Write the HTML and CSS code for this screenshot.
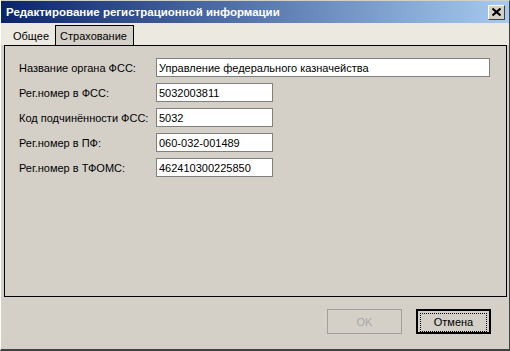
FILE: index.html
```html
<!DOCTYPE html>
<html lang="ru">
<head>
    <meta charset="UTF-8">
    <title>Редактирование регистрационной информации</title>
    <link rel="stylesheet" href="styles.css">
</head>
<body>
    <div class="window">
        <div class="titlebar">
            <span class="title">Редактирование регистрационной информации</span>
            <button class="close">
                <svg width="9" height="8" viewBox="0 0 9 8">
                    <path d="M0.5 0.5 L8.5 7.5 M8.5 0.5 L0.5 7.5" stroke="#000" stroke-width="2"/>
                </svg>
            </button>
        </div>
        <div class="tabs">
            <div class="tab">Общее</div>
            <div class="tab active">Страхование</div>
        </div>
        <div class="panel">
            <div class="row">
                <label>Название органа ФСС:</label>
                <input class="wide" type="text" value="Управление федерального казначейства">
            </div>
            <div class="row">
                <label>Рег.номер в ФСС:</label>
                <input type="text" value="5032003811">
            </div>
            <div class="row">
                <label>Код подчинённости ФСС:</label>
                <input type="text" value="5032">
            </div>
            <div class="row">
                <label>Рег.номер в ПФ:</label>
                <input type="text" value="060-032-001489">
            </div>
            <div class="row">
                <label>Рег.номер в ТФОМС:</label>
                <input type="text" value="462410300225850">
            </div>
        </div>
        <div class="buttons">
            <button class="btn" disabled>OK</button>
            <button class="btn default"><span>Отмена</span></button>
        </div>
    </div>
</body>
</html>
```

FILE: styles.css
```css
body {
    margin: 0;
    background: #d4d0c8;
    font-family: "Liberation Sans", Arial, sans-serif;
    font-size: 11px;
}

.window {
    width: 510px;
    height: 351px;
    box-sizing: border-box;
    border-left: 1px solid #fff;
    border-top: 1px solid #d4d0c8;
    border-right: 1px solid #404040;
    border-bottom: 2px solid #404040;
    background: #d4d0c8;
    display: flex;
    flex-direction: column;
}

.titlebar {
    height: 22px;
    background: linear-gradient(to right, #0a246a, #a6caf0);
    display: flex;
    align-items: center;
    justify-content: space-between;
    padding: 0 4px 0 5px;
}

.title {
    color: #fff;
    font-weight: bold;
    font-size: 11.5px;
}

.close {
    width: 17px;
    height: 15px;
    padding: 0;
    background: #d4d0c8;
    border: 1px solid;
    border-color: #fff #404040 #404040 #fff;
    display: flex;
    align-items: center;
    justify-content: center;
}

.tabs {
    display: flex;
    align-items: flex-end;
    height: 22px;
    padding-left: 5px;
    background: #ece9e0;
}

.tab {
    height: 18px;
    line-height: 18px;
    padding: 0 5px 0 6px;
    border: 1px solid transparent;
    border-bottom: none;
    color: #000;
    white-space: nowrap;
}

.tab.active {
    height: 20px;
    line-height: 21px;
    padding: 0 6px 0 4px;
    border-color: #000;
    background: #d4d0c8;
    margin-bottom: -1px;
}

.panel {
    margin: 0 2px 0 3px;
    height: 252px;
    box-sizing: border-box;
    border: 1px solid #000;
    padding: 12px 15px 0 14px;
    display: flex;
    flex-direction: column;
    gap: 6px;
}

.row {
    display: flex;
    align-items: center;
    height: 19px;
}

.row label {
    width: 137px;
    flex: none;
    white-space: nowrap;
}

.row input {
    width: 117px;
    height: 19px;
    box-sizing: border-box;
    border: 1px solid #808080;
    background: #fff;
    padding: 0 2px;
    font: inherit;
    margin: 0;
}

.row input.wide {
    width: 334px;
}

.buttons {
    flex: 1;
    display: flex;
    justify-content: flex-end;
    align-items: flex-start;
    gap: 14px;
    padding: 12px 18px 0 0;
}

.btn {
    width: 75px;
    height: 25px;
    box-sizing: border-box;
    background: #d4d0c8;
    font: inherit;
    color: #000;
    padding: 0;
}

.btn:disabled {
    border: 1px solid #a0a0a0;
    color: #a8a8a8;
}

.btn.default {
    border: 2px solid #000;
    padding: 2px;
}

.btn.default span {
    display: block;
    height: 17px;
    line-height: 17px;
    border: 1px dotted #000;
}
```
